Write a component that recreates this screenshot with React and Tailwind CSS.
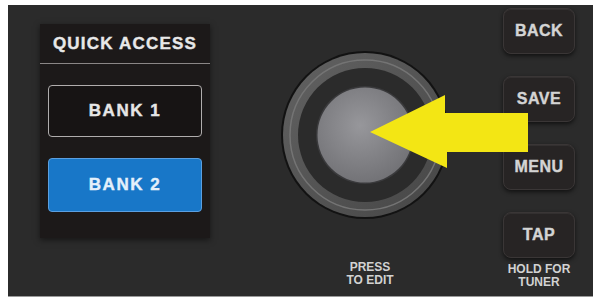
import React from 'react';

const font = { fontFamily: '"Liberation Sans", Arial, sans-serif' };

const SideButton = ({ label }) => (
  <div className="flex h-[46px] w-[72px] items-center justify-center rounded-lg border border-[#3a3636] bg-[#272424] shadow-[0_2px_4px_rgba(0,0,0,0.6),inset_0_1px_0_rgba(255,255,255,0.06)]">
    <span className="text-[16px] font-bold tracking-[0.5px] text-[#d4d4d4] [-webkit-text-stroke:0.4px_#d4d4d4]">{label}</span>
  </div>
);

const Knob = () => (
  <svg width="170" height="170" viewBox="0 0 170 170">
    <defs>
      <linearGradient id="ring" x1="0" y1="0" x2="1" y2="1">
        <stop offset="0" stopColor="#626262" />
        <stop offset="1" stopColor="#464646" />
      </linearGradient>
      <radialGradient id="face" cx="0.45" cy="0.4" r="0.65">
        <stop offset="0" stopColor="#97979b" />
        <stop offset="1" stopColor="#707074" />
      </radialGradient>
    </defs>
    <circle cx="85" cy="85" r="84" fill="#121212" />
    <circle cx="85" cy="85" r="82" fill="url(#ring)" />
    <circle cx="85" cy="85" r="75" fill="none" stroke="#747474" strokeWidth="1.5" />
    <circle cx="85" cy="85" r="67" fill="#2b2b2b" />
    <circle cx="85" cy="85" r="49" fill="#3a3a3c" />
    <circle cx="85" cy="85" r="47.5" fill="url(#face)" />
  </svg>
);

export default function App() {
  return (
    <div className="h-[301px] w-[598px] bg-white pl-[8px] pt-[5px]" style={font}>
      <div className="relative flex h-[292px] w-[585px] items-start border-b border-[#9a9a9a] bg-[#2b2b2b]">
        {/* quick access */}
        <div className="ml-[32px] mt-[19px] flex h-[214px] w-[170px] flex-col bg-[#1c1919] shadow-[0_2px_6px_rgba(0,0,0,0.5)]">
          <div className="flex h-[40px] items-center justify-center border-b border-[#8a8686]">
            <span className="text-[17px] font-bold tracking-[1.2px] text-[#e8e8e8] [-webkit-text-stroke:0.4px_#e8e8e8]">QUICK ACCESS</span>
          </div>
          <div className="mt-[21px] flex flex-col gap-[21px] px-[8px]">
            <div className="flex h-[52px] items-center justify-center rounded-[4px] border-[1.5px] border-[#b0adad] bg-[#171414]">
              <span className="text-[17px] font-bold tracking-[1.5px] text-[#e6e6e6] [-webkit-text-stroke:0.4px_#e6e6e6]">BANK 1</span>
            </div>
            <div className="flex h-[54px] items-center justify-center rounded-[4px] border border-[#5b9fe0] bg-[#1877c8]">
              <span className="text-[17px] font-bold tracking-[1.5px] text-[#e4f0fb] [-webkit-text-stroke:0.4px_#e4f0fb]">BANK 2</span>
            </div>
          </div>
        </div>

        {/* knob */}
        <div className="ml-[70px] mt-[45px] flex flex-col items-center">
          <Knob />
          <div className="mt-[41px] ml-[10px] flex flex-col items-center text-[12px] font-bold leading-[13px] text-[#d2d2d2]">
            <span>PRESS</span>
            <span>TO EDIT</span>
          </div>
        </div>

        {/* side buttons */}
        <div className="ml-[53px] mt-[3px] flex flex-col items-center">
          <div className="flex flex-col gap-[22px]">
            <SideButton label="BACK" />
            <SideButton label="SAVE" />
            <SideButton label="MENU" />
            <SideButton label="TAP" />
          </div>
          <div className="mt-[5px] flex flex-col items-center text-[12px] font-bold leading-[13px] text-[#d2d2d2]">
            <span>HOLD FOR</span>
            <span>TUNER</span>
          </div>
        </div>

        {/* arrow */}
        <svg className="pointer-events-none absolute left-0 top-0" width="585" height="292" viewBox="0 0 585 292">
          <polygon points="362,127 437,90 437,108 520,108 520,147 439,147 439,163" fill="#f3e614" />
        </svg>
      </div>
    </div>
  );
}
